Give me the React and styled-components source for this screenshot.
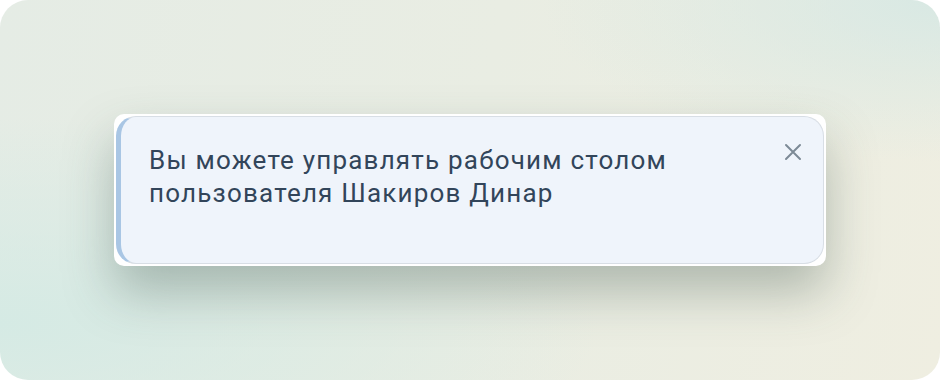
import React from "react";
import styled, { createGlobalStyle } from "styled-components";

const GlobalStyle = createGlobalStyle`
	html, body {
		margin: 0;
		padding: 0;
		background: #ffffff;
	}
	body {
		font-family: Roboto, "Noto Sans", sans-serif;
	}
`;

const Frame = styled.div`
	width: 940px;
	height: 380px;
	border-radius: 28px;
	background:
		radial-gradient(ellipse at 0% 85%, rgba(212, 234, 228, 0.95), rgba(212, 234, 228, 0) 45%),
		radial-gradient(ellipse at 100% 0%, rgba(214, 232, 228, 0.9), rgba(214, 232, 228, 0) 30%),
		linear-gradient(100deg, #e5ece5 0%, #e9ede3 50%, #efeee1 100%);
	display: flex;
	align-items: center;
	justify-content: center;
	overflow: hidden;
`;

const Toast = styled.div`
	width: 712px;
	height: 152px;
	box-sizing: border-box;
	padding: 2px;
	background: #ffffff;
	border-radius: 10px;
	box-shadow: 0 26px 50px rgba(60, 82, 72, 0.34);
`;

const Body = styled.div`
	height: 100%;
	box-sizing: border-box;
	display: flex;
	align-items: flex-start;
	justify-content: space-between;
	padding: 27px 21px 0 28px;
	background: #eff4fb;
	border: 1px solid #d8dee5;
	border-left: 5px solid #a9c6e4;
	border-radius: 20px;
`;

const Message = styled.p`
	margin: 0;
	font-size: 26px;
	line-height: 33px;
	letter-spacing: 1.2px;
	color: #32455a;
	max-width: 560px;
`;

const Close = styled.button`
	display: flex;
	margin: -1px 0 0;
	padding: 0;
	border: none;
	background: none;
	color: #7d8a96;
	cursor: pointer;
`;

function CloseIcon() {
	return (
		<svg width="18" height="18" viewBox="0 0 18 18" fill="none">
			<path d="M2 2L16 16M16 2L2 16" stroke="currentColor" strokeWidth="2" strokeLinecap="round" />
		</svg>
	);
}

export default function App() {
	return (
		<>
			<GlobalStyle />
			<Frame>
				<Toast>
					<Body>
						<Message>Вы можете управлять рабочим столом пользователя Шакиров Динар</Message>
						<Close aria-label="Закрыть">
							<CloseIcon />
						</Close>
					</Body>
				</Toast>
			</Frame>
		</>
	);
}
